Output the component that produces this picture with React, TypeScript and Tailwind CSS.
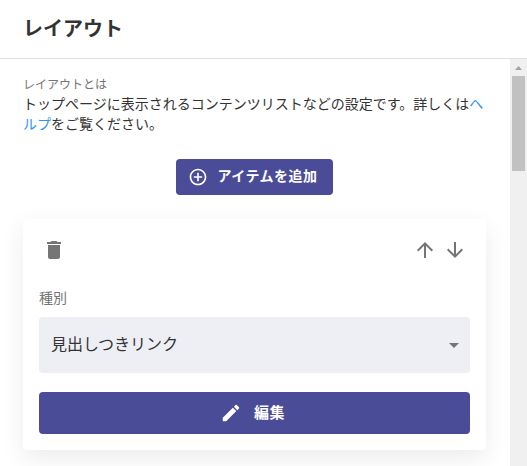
import { MdAddCircleOutline, MdArrowDownward, MdArrowDropDown, MdArrowUpward, MdDelete, MdEdit } from 'react-icons/md';

export default function App() {
  return (
    <div className="flex h-[466px] w-[527px] flex-col overflow-hidden bg-white font-['Roboto','Noto_Sans_CJK_JP',sans-serif] text-[#333]">
      <header className="h-[59px] shrink-0 border-b border-[#e0e0e0] pl-[23px] pt-[13px]">
        <h1 className="text-[20px] font-bold leading-[32px]">レイアウト</h1>
      </header>

      <div className="flex min-h-0 flex-1">
        <main className="min-w-0 flex-1 overflow-hidden pl-[23px] pr-6 pt-[18px]">
          <p className="text-[12px] leading-[17px] text-[#757575]">レイアウトとは</p>
          <p className="text-[14px] leading-5">
            トップページに表示されるコンテンツリストなどの設定です。詳しくは
            <a href="#" className="text-[#2f93f3]">ヘルプ</a>
            をご覧ください。
          </p>

          <button className="mx-auto mt-[25px] flex h-9 w-[157px] items-center rounded bg-[#4a4c98] pl-3 text-[14px] font-bold tracking-[0.5px] text-white">
            <MdAddCircleOutline className="mr-[9.5px] size-5" />
            <span className="pb-[2px]">アイテムを追加</span>
          </button>

          <section className="mt-6 h-[231px] rounded bg-white px-4 pt-[19px] shadow-[0_8px_24px_rgba(0,0,0,0.08)]">
            <div className="flex items-center text-[#757575]">
              <button className="ml-[3px]"><MdDelete className="size-6" /></button>
              <button className="ml-auto"><MdArrowUpward className="size-6" /></button>
              <button className="ml-[6px] mr-[3px]"><MdArrowDownward className="size-6" /></button>
            </div>
            <p className="mt-[26px] text-[14px] leading-5 text-[#757575]">種別</p>
            <div className="mt-[9px] flex h-14 items-center justify-between rounded bg-[#eeeff4] pl-3 pr-1 text-[16px]">
              見出しつきリンク
              <MdArrowDropDown className="size-6 text-[#757575]" />
            </div>
            <button className="mt-[19px] flex h-[42px] w-full items-center justify-center gap-3 rounded bg-[#4a4c98] pr-[4px] text-[15px] font-bold tracking-[0.4px] text-white">
              <MdEdit className="size-[22px]" />
              編集
            </button>
          </section>
        </main>

        {/* Scrollbar */}
        <div className="flex w-[17px] shrink-0 flex-col items-center bg-[#f0f0f0]">
          <div className="flex h-[17px] items-center">
            <svg width="7" height="4" viewBox="0 0 7 4" fill="#a3a3a3"><path d="M0 4 3.5 0 7 4z" /></svg>
          </div>
          <div className="h-[95px] w-[13px] bg-[#c1c1c1]" />
        </div>
      </div>
    </div>
  );
}
